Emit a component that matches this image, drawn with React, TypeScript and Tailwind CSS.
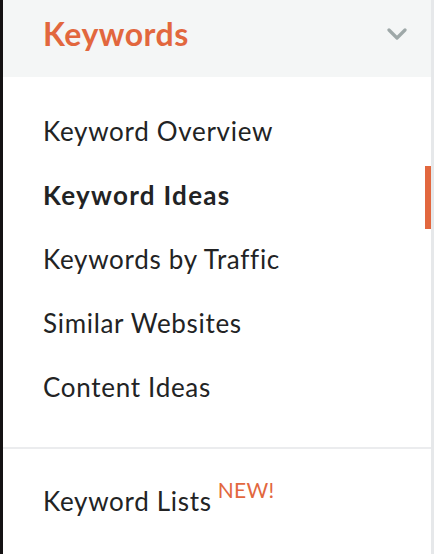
import React from "react";

// Sidebar section: Keywords menu
const items = [
	{ label: "Keyword Overview", active: false },
	{ label: "Keyword Ideas", active: true },
	{ label: "Keywords by Traffic", active: false },
	{ label: "Similar Websites", active: false },
	{ label: "Content Ideas", active: false },
];

const Chevron = () => (
	<svg width="20" height="13" viewBox="0 0 20 13" fill="none">
		<polyline points="2,2 10,10 18,2" stroke="#9ea8a8" strokeWidth="3.2" strokeLinecap="round" strokeLinejoin="round" />
	</svg>
);

const App = () => {
	return (
		<div className="flex h-[554px] w-full bg-white font-['Lato',sans-serif] text-[#222324]">
			<div className="w-[3px] bg-[#141213]" />
			<div className="flex flex-1 flex-col">
				{/* Section header */}
				<div className="flex h-[77px] items-center justify-between bg-[#f4f6f6] pl-[40px] pr-[24px]">
					<span className="pb-[10px] text-[32px] font-bold tracking-[0.5px] text-[#e2673e]">Keywords</span>
					<span className="pb-[8px]">
						<Chevron />
					</span>
				</div>

				{/* Menu items */}
				<ul className="pt-[22px] pb-[28px]">
					{items.map((item) => (
						<li key={item.label} className="flex h-[64px] items-center justify-between pl-[40px]">
							<span className={`text-[26px] leading-[64px] ${item.active ? "font-bold tracking-[1.3px]" : "font-normal tracking-[0.7px]"}`}>{item.label}</span>
							{item.active && <span className="mt-[4px] h-[63px] w-[6px] bg-[#e2673e]" />}
						</li>
					))}
				</ul>

				<div className="h-[2px] bg-[#ebecee]" />

				<div className="mt-[20px] flex h-[64px] items-center pl-[40px]">
					<span className="text-[26px] leading-[64px] tracking-[0.7px]">Keyword Lists</span>
					<span className="mb-[22px] ml-[6px] text-[21px] tracking-[0.3px] text-[#e2673e]">NEW!</span>
				</div>
			</div>
			<div className="w-[3px] bg-[#e6e8ea]" />
		</div>
	);
};

export default App;
